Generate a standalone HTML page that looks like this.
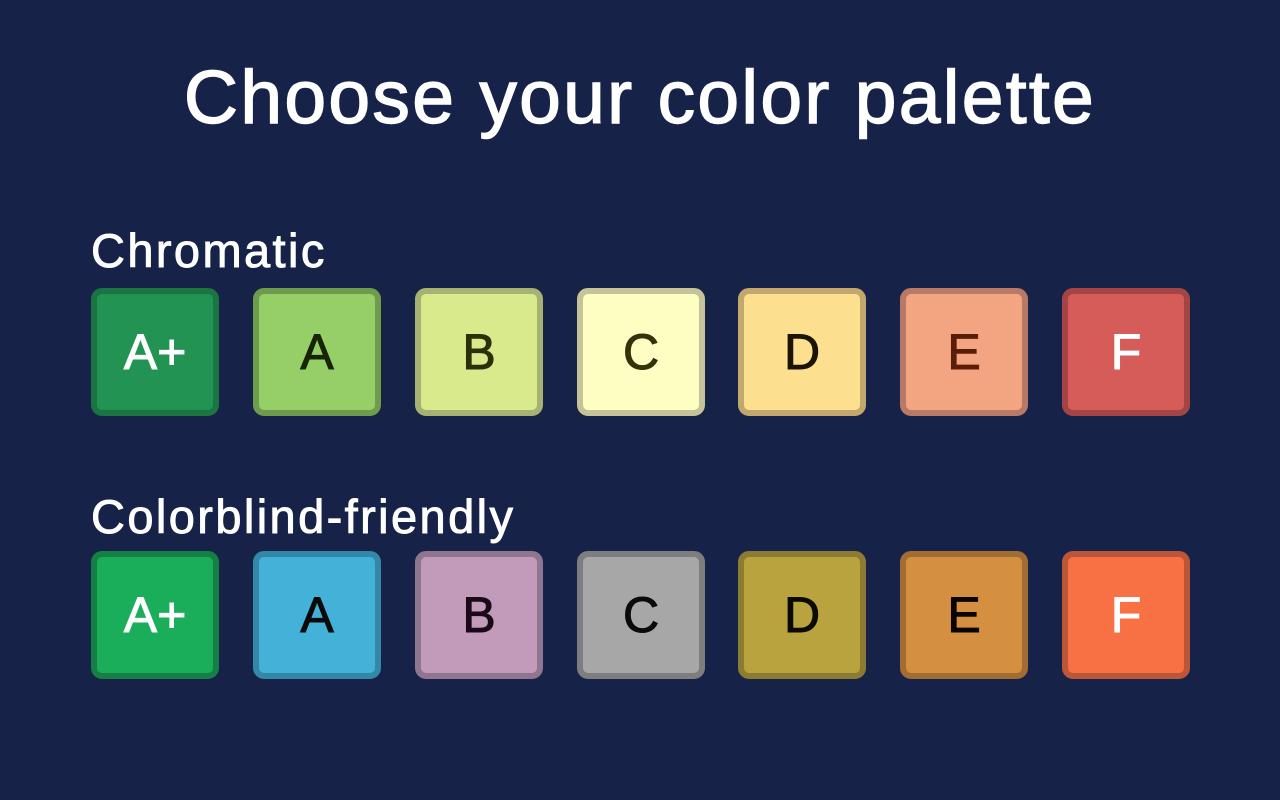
<!DOCTYPE html>
<html><head><style>
body{margin:0;width:1280px;height:800px;background:#162247;font-family:"Liberation Sans",sans-serif;color:#fff;position:relative;overflow:hidden}
h1{position:absolute;top:52px;left:0;width:1280px;text-align:center;margin:0;font-size:75px;font-weight:normal;letter-spacing:2.3px;-webkit-text-stroke:1.4px #fff;line-height:90px}
h2{position:absolute;left:91px;margin:0;font-size:47px;font-weight:normal;letter-spacing:2.4px;-webkit-text-stroke:0.9px #fff;line-height:54px}
.row{position:absolute;left:91px}
.t{position:absolute;top:0;width:116px;height:116px;border:6px solid;border-radius:11px;display:flex;align-items:center;justify-content:center;font-size:50px;line-height:1;-webkit-text-stroke:1px currentColor}
</style></head><body>
<h1>Choose your color palette</h1>
<h2 style="top:224px">Chromatic</h2>
<div class="row" style="top:288px">
<div class="t" style="left:0;background:#229352;border-color:#1b7441;color:#fff">A+</div>
<div class="t" style="left:162px;background:#96cf68;border-color:#6f9b4c;color:#182406">A</div>
<div class="t" style="left:324px;background:#d9ea8c;border-color:#a6b272;color:#2a3008">B</div>
<div class="t" style="left:486px;background:#fefec3;border-color:#c5c499;color:#33330a">C</div>
<div class="t" style="left:647px;background:#fde08f;border-color:#c2a86c;color:#1a1400">D</div>
<div class="t" style="left:809px;background:#f3a481;border-color:#b87966;color:#5a1e08">E</div>
<div class="t" style="left:971px;background:#d65c59;border-color:#a44445;color:#fff">F</div>
</div>
<h2 style="top:490px">Colorblind-friendly</h2>
<div class="row" style="top:551px">
<div class="t" style="left:0;background:#1aad5a;border-color:#157f45;color:#fff">A+</div>
<div class="t" style="left:162px;background:#43b1d8;border-color:#3388a7;color:#0a0a0a">A</div>
<div class="t" style="left:324px;background:#c29bba;border-color:#8f7590;color:#1a0a18">B</div>
<div class="t" style="left:486px;background:#a7a7a7;border-color:#7e7e80;color:#0a0a0a">C</div>
<div class="t" style="left:647px;background:#b8a33f;border-color:#8c7c33;color:#0a0a00">D</div>
<div class="t" style="left:809px;background:#d58f40;border-color:#a26d33;color:#0a0500">E</div>
<div class="t" style="left:971px;background:#f77144;border-color:#bb5638;color:#fff">F</div>
</div>
</body></html>
